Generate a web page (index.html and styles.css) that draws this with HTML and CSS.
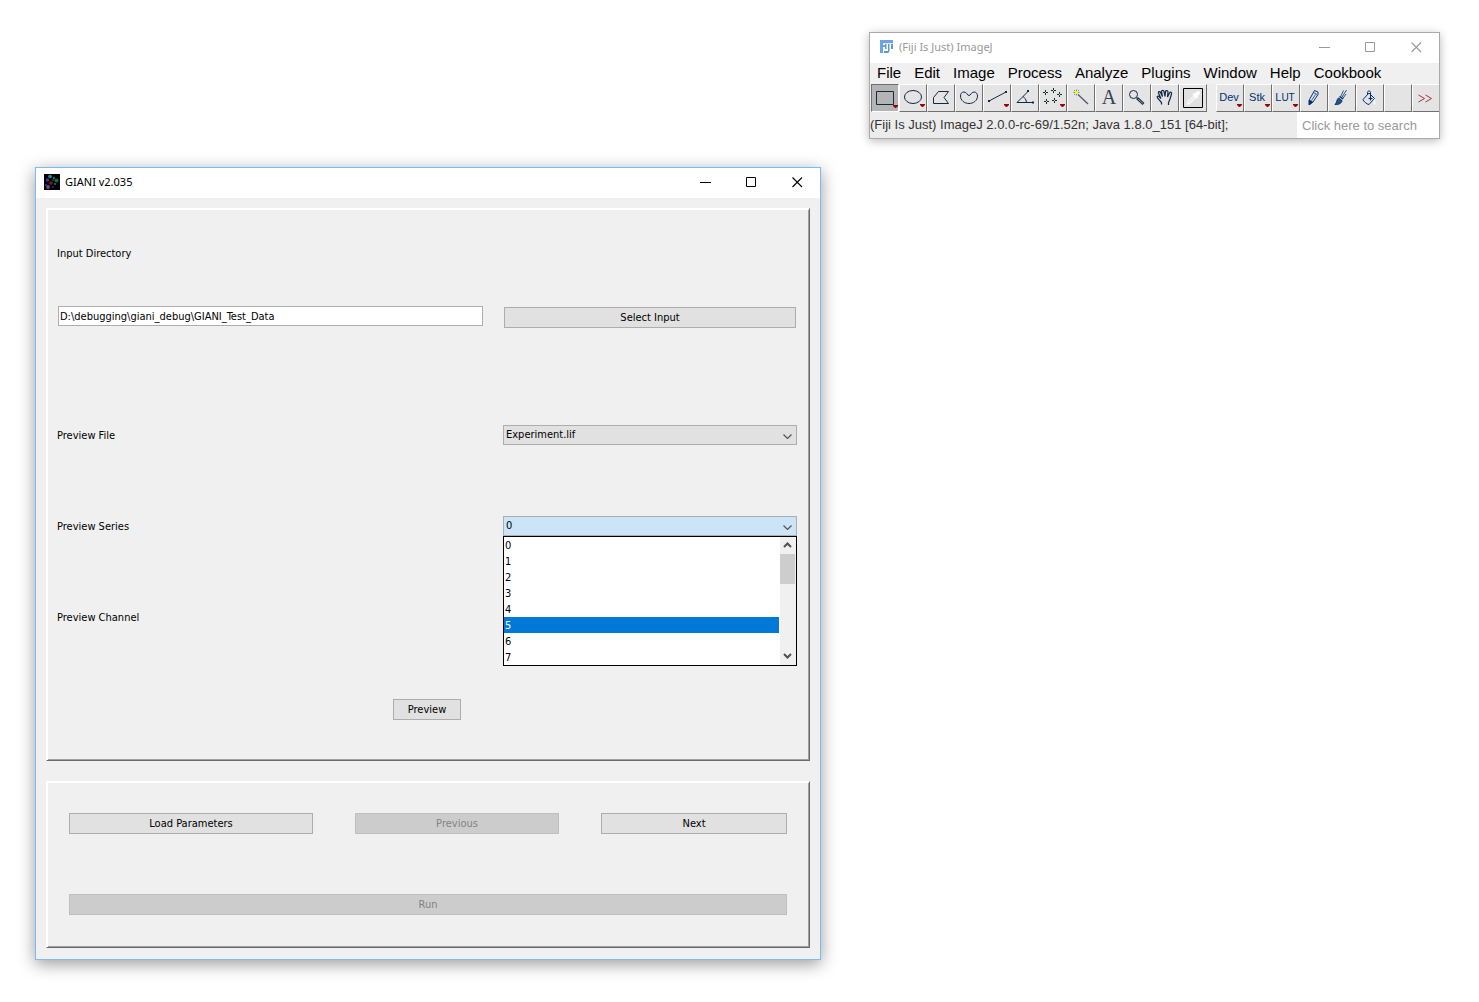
FILE: index.html
```html
<!DOCTYPE html>
<html lang="en">
<head>
<meta charset="utf-8">
<title>GIANI v2.035</title>
<link rel="stylesheet" href="styles.css">
</head>
<body>
<svg class="defs" aria-hidden="true">
  <symbol id="win-min" viewBox="0 0 11 11"><path d="M0 5.5h11" stroke="currentColor"/></symbol>
  <symbol id="win-max" viewBox="0 0 11 11"><path d="M.5 .5h9v9h-9z" fill="none" stroke="currentColor"/></symbol>
  <symbol id="win-close" viewBox="0 0 11 11"><path d="M.5 .5l9.500 9.500M10 .5l-9.500 9.500" fill="none" stroke="currentColor" stroke-width="1.1"/></symbol>
  <symbol id="chev" viewBox="0 0 9 5"><path d="M.5 .5l4 4 4-4" fill="none" stroke="currentColor" stroke-width="1.2"/></symbol>
  <symbol id="chev-bold" viewBox="0 0 9 6"><path d="M1 1l3.500 3.500L8 1" fill="none" stroke="currentColor" stroke-width="2"/></symbol>
  <symbol id="more" viewBox="0 0 5 3"><path d="M0 0h5v1L3 3H2L0 1z" fill="#a00000" stroke="none"/></symbol>
</svg>
<main class="desktop">
  <section class="window giani" aria-label="GIANI">
    <header class="titlebar">
      <svg class="app-icon" viewBox="0 0 16 16">
        <rect width="16" height="16" fill="#000"/>
        <circle cx="6" cy="2.500" r="1.800" fill="#2a8f88"/>
        <circle cx="10" cy="4" r="1.300" fill="#35518a"/>
        <circle cx="12.500" cy="6.500" r="2" fill="#12702c"/>
        <circle cx="3.500" cy="6" r="1.700" fill="#5030a0"/>
        <circle cx="7" cy="9" r="1.800" fill="#7a1c14"/>
        <circle cx="11" cy="10" r="1.200" fill="#274a86"/>
        <circle cx="4" cy="13" r="1.900" fill="#84409a"/>
        <circle cx="9" cy="6" r="1" fill="#284a28"/>
        <circle cx="2" cy="11" r="1" fill="#383878"/>
        <circle cx="9" cy="13" r="1" fill="#402060"/>
      </svg>
      <h1 class="title">GIANI v2.035</h1>
      <div class="controls">
        <button class="ctl" aria-label="Minimize"><svg><use href="#win-min"/></svg></button>
        <button class="ctl" aria-label="Maximize"><svg><use href="#win-max"/></svg></button>
        <button class="ctl" aria-label="Close"><svg><use href="#win-close"/></svg></button>
      </div>
    </header>
    <div class="body">
      <form class="panel inputs">
        <label class="wide" for="dir">Input Directory</label>
        <input class="field" id="dir" type="text" value="D:\debugging\giani_debug\GIANI_Test_Data">
        <button class="btn select-input" type="button">Select Input</button>
        <label class="name" for="file">Preview File</label>
        <div class="combo">
          <select id="file"><option>Experiment.lif</option></select>
          <svg class="arrow"><use href="#chev"/></svg>
        </div>
        <label class="name" for="series">Preview Series</label>
        <div class="combo open">
          <select id="series"><option>0</option></select>
          <svg class="arrow"><use href="#chev"/></svg>
          <div class="popup">
            <ul class="list" role="listbox" aria-label="Series">
              <li role="option">0</li>
              <li role="option">1</li>
              <li role="option">2</li>
              <li role="option">3</li>
              <li role="option">4</li>
              <li role="option" class="active" aria-selected="true">5</li>
              <li role="option">6</li>
              <li role="option">7</li>
            </ul>
            <div class="scroll">
              <span class="step up"><svg><use href="#chev-bold"/></svg></span>
              <span class="thumb"></span>
              <span class="step down"><svg><use href="#chev-bold"/></svg></span>
            </div>
          </div>
        </div>
        <span class="wide name">Preview Channel</span>
        <button class="btn preview" type="button">Preview</button>
      </form>
      <div class="panel actions">
        <div class="row">
          <button class="btn">Load Parameters</button>
          <button class="btn" disabled>Previous</button>
          <button class="btn">Next</button>
        </div>
        <button class="btn" disabled>Run</button>
      </div>
    </div>
  </section>

  <section class="window imagej" aria-label="ImageJ">
    <header class="titlebar">
      <svg class="app-icon" viewBox="0 0 16 16">
        <path d="M2 0h13v3H5v2h2v2H5v6H2z" fill="#6aa5df"/>
        <path d="M7 4h1.500v5H7zM10 4h1.500v7q0 2-2 2H6v-2h4zM13 2h2v7h-2z" fill="#5f96cf"/>
        <path d="M5 3.500h10" stroke="#dbe9f7"/>
      </svg>
      <h2 class="title">(Fiji Is Just) ImageJ</h2>
      <div class="controls">
        <button class="ctl" aria-label="Minimize"><svg><use href="#win-min"/></svg></button>
        <button class="ctl" aria-label="Maximize"><svg><use href="#win-max"/></svg></button>
        <button class="ctl" aria-label="Close"><svg><use href="#win-close"/></svg></button>
      </div>
    </header>
    <nav class="menu">
      <a href="#">File</a><a href="#">Edit</a><a href="#">Image</a><a href="#">Process</a><a href="#">Analyze</a><a href="#">Plugins</a><a href="#">Window</a><a href="#">Help</a><a href="#">Cookbook</a>
    </nav>
    <div class="tools">
      <button class="tool pressed" aria-label="Rectangle"><svg viewBox="1 1 26 26"><path d="M5.500 7.500h17v13h-17z"/><use href="#more" x="22" y="21" width="5" height="3"/></svg></button>
      <button class="tool" aria-label="Oval"><svg viewBox="1 1 26 26"><ellipse cx="14" cy="13" rx="8.500" ry="6.500"/><use href="#more" x="21" y="20" width="5" height="3"/></svg></button>
      <button class="tool" aria-label="Polygon"><svg viewBox="1 1 26 26"><path d="M6.500 19.500v-6l5-6h10l-4.500 6 4.500 6z"/></svg></button>
      <button class="tool" aria-label="Freehand"><svg viewBox="1 1 26 26"><path d="M14 11.500c2 0 2-3.500 5-3.500 2.500 0 3.500 2 3.500 4 0 4.500-4 7.500-8.500 7.500S5.500 16.500 5.500 12c0-2 1-4 3.500-4 3 0 3 3.500 5 3.500z"/></svg></button>
      <button class="tool" aria-label="Line"><svg viewBox="1 1 26 26"><path d="M6 17L23 8"/><path class="dot" d="M5 16h2v2H5zM22 7h2v2h-2z"/><use href="#more" x="21" y="20" width="5" height="3"/></svg></button>
      <button class="tool" aria-label="Angle"><svg viewBox="1 1 26 26"><path d="M22 18.500H6L17 7.500M12 12.500q3.500 2 3.500 6"/><path class="dot" d="M16 6h2v2h-2zM21 17.500h2v2h-2z"/></svg></button>
      <button class="tool" aria-label="Multi-point"><svg viewBox="1 1 26 26"><path d="M6.500 6v5M4 8.500h5M14.500 4v5M12 6.500h5M20.500 8v5M18 10.500h5M7.500 15v5M5 17.500h5M15.500 14v5M13 16.500h5"/><path fill="#ff0" stroke="none" d="M6 8h1v1H6zM14 6h1v1h-1zM20 10h1v1h-1zM7 17h1v1H7zM15 16h1v1h-1z"/><use href="#more" x="21" y="20" width="5" height="3"/></svg></button>
      <button class="tool" aria-label="Wand"><svg viewBox="1 1 26 26"><path d="M11 10.500l10 9.500" stroke="#506070" stroke-width="1.400"/><path d="M7 6l5 5M12 6l-5 5M9.500 5.500v6M6.500 8.500h6" stroke="#65718a" stroke-width=".8"/><path fill="#ff0" stroke="none" d="M8 7h3v3H8z"/></svg></button>
      <button class="tool" aria-label="Text"><svg viewBox="1 1 26 26"><text x="14" y="20" class="letter">A</text></svg></button>
      <button class="tool" aria-label="Magnifier"><svg viewBox="1 1 26 26"><circle cx="10.500" cy="10.500" r="4"/><path d="M14 14l6.500 6" stroke-width="2.800"/><path d="M15 15l5 4.500" stroke="#ccc" stroke-width=".8"/></svg></button>
      <button class="tool" aria-label="Hand"><svg viewBox="1 1 26 26"><path stroke-width="1.200" d="M10.500 20.500v-2l-4-4.500c-1-1.500.5-2.500 1.500-1.500l2 2-2.500-5.500c-.5-1.500 1.500-2 2-.5l2 4-1-5c0-1.500 2.500-1.500 2.500 0l1 5 .5-5c.5-1.500 2.500-1 2.500.5l-.5 5 2-4c1-1.500 2.500-.5 2 1l-1.500 5-1.500 3.500v2.500"/></svg></button>
      <button class="tool" aria-label="Color picker"><svg viewBox="1 1 26 26"><path d="M4.500 4.500h19v19h-19z" stroke="#000" fill="#e0e0e0"/><path d="M8 20.500l1-3 6-6 2 2-6 6z" fill="#ececec" stroke="#fff"/><path d="M14 9.500l4.500 4.500" stroke="#fff" stroke-width="2"/><path d="M16.500 11.500l2.500-2.500" stroke="#fff" stroke-width="4" stroke-linecap="round"/></svg></button>
      <span class="gap"></span>
      <button class="tool" aria-label="Dev"><svg viewBox="1 1 26 26"><text x="13" y="17">Dev</text><use href="#more" x="21" y="20" width="5" height="3"/></svg></button>
      <button class="tool" aria-label="Stk"><svg viewBox="1 1 26 26"><text x="13" y="17">Stk</text><use href="#more" x="21" y="20" width="5" height="3"/></svg></button>
      <button class="tool" aria-label="LUT"><svg viewBox="1 1 26 26"><text x="13" y="17">L<tspan class="small">UT</tspan></text><use href="#more" x="21" y="20" width="5" height="3"/></svg></button>
      <button class="tool blue" aria-label="Pencil"><svg viewBox="1 1 26 26"><path d="M14.500 6.500l3.500 1.500v2.500l-5 7.500-3.500 2.500v-5z" fill="#dfe8f2"/><path d="M13.500 8.500l3.500 2M15.500 10.500l-4 6" stroke-width=".8"/><path d="M9 21v-5l3.500 2z" fill="#003070"/></svg></button>
      <button class="tool blue" aria-label="Paintbrush"><svg viewBox="1 1 26 26"><path d="M18.500 6l-5 8M15.500 6.500l-3 6.500M18 10l-3.500 5" stroke-width=".8"/><path d="M11.500 12.500l3.500 2.500" stroke-width="1.500"/><path d="M10.500 14l3.500 2.500c0 2.500-3.500 4.500-7 4 2-1.500 1.500-5 3.500-6.500z" fill="#28548c"/></svg></button>
      <button class="tool blue" aria-label="Flood fill"><svg viewBox="1 1 26 26"><path d="M17.500 14c2 1 2.500 4 1.500 7-1.500-1-2-3-1.500-7z" fill="#fff" stroke="none"/><path d="M13 9l5.500 5.500-5.500 6c-2 0-5.500-3-6-5zM11.500 10.500v-2c0-2 3-2 3 0V14"/><path d="M12.500 14.500h4M14.500 12.500v4" stroke-width="1.200"/></svg></button>
      <button class="tool" aria-label="Unused"></button>
      <button class="tool last" aria-label="More tools"><svg viewBox="1 1 26 26"><path d="M6.500 11l6 3.500-6 3.500M13.500 11l6 3.500-6 3.500" stroke="#b03038"/></svg></button>
    </div>
    <footer class="status">
      <p class="message">(Fiji Is Just) ImageJ 2.0.0-rc-69/1.52n; Java 1.8.0_151 [64-bit];</p>
      <input class="search" type="text" placeholder="Click here to search" aria-label="Search">
    </footer>
  </section>
</main>
</body>
</html>
```
FILE: styles.css
```css
* { box-sizing: border-box; }
body { margin: 0; background: #fff; color: #000; font: 11px/14px "DejaVu Sans Condensed", "DejaVu Sans", sans-serif; font-stretch: condensed; }
button, input, select { font: inherit; font-stretch: inherit; color: inherit; margin: 0; border-radius: 0; }
h1, h2, p, ul { margin: 0; padding: 0; }
.defs { position: absolute; width: 0; height: 0; }

.desktop { display: grid; grid-template-columns: 786fr 571fr; column-gap: 48px; align-items: start; padding: 32px 39px 32px 35px; }
.window { min-width: 0; border: 1px solid #aaa; background: #f0f0f0; box-shadow: 0 2px 9px rgba(0, 0, 0, .28); }
.giani { margin-top: 135px; border-color: #7eb9f0; box-shadow: 0 4px 16px rgba(0, 0, 0, .4); }

.titlebar { display: flex; align-items: flex-start; height: 30px; padding-left: 8px; gap: 5px; background: #fff; }
.imagej .titlebar { color: #999; }
.app-icon { width: 16px; height: 16px; margin-top: 6px; }
.imagej .app-icon { margin-top: 7px; }
.title { flex: 1; font: 11px/28px "Noto Sans", "Open Sans", sans-serif; }
.controls { display: flex; }
.ctl { display: flex; width: 46px; height: 29px; padding: 9px 0 0 18px; border: 0; background: none; }
.ctl svg { width: 11px; height: 11px; }

.body { display: grid; gap: 20px; padding: 10px 10px 11px; }
.panel { border: 1px solid; border-color: #fff #696969 #696969 #fff; box-shadow: inset 1px 1px #fff, inset -1px -1px #a0a0a0; }
.inputs { display: grid; grid-template-columns: 427fr 294fr; grid-template-rows: 88px 91px 91px 91px 91px 95px; column-gap: 19px; align-items: center; padding: 1px 12px 3px 10px; }
.wide { grid-column: 1 / -1; }
.name { padding-top: 2px; }
.field { align-self: start; height: 20px; margin: 8px 1px 0; padding: 0 1px; border: 1px solid #abadb3; background: #fff; }
.btn { min-width: 0; height: 21px; padding: 0 14px; border: 1px solid #adadad; background: #e1e1e1; }
.btn:disabled { border-color: #bfbfbf; background: #ccc; color: #838383; }
.select-input { align-self: start; margin: 9px 1px 0; }
.preview { grid-column: 1 / -1; justify-self: center; }

.combo { position: relative; height: 20px; }
.combo select { display: block; width: 100%; height: 20px; padding: 1px 2px 0; border: 1px solid #adadad; background: #e1e1e1; appearance: none; }
.combo.open select { background: #cce4f7; }
.arrow { position: absolute; right: 5px; top: 9px; width: 9px; height: 5px; color: #555; }
.popup { position: absolute; z-index: 1; top: 20px; left: 0; right: 0; display: flex; border: 1px solid #000; background: #fff; }
.list { flex: 1; list-style: none; margin-right: 1px; line-height: 14px; }
.list li { padding: 2px 0 0 1px; }
.list .active { background: #0078d7; color: #fff; }
.scroll { display: flex; flex-direction: column; width: 16px; padding-right: 1px; background: #f0f0f0; }
.step { display: grid; place-items: center; height: 17px; color: #505050; }
.step svg { width: 9px; height: 6px; }
.up svg { transform: rotate(180deg); }
.thumb { height: 30px; background: #cdcdcd; }
.down { margin-top: auto; }

.actions { display: grid; gap: 60px; padding: 31px 22px 32px; }
.row { display: grid; grid-template-columns: 244fr 204fr 186fr; gap: 42px; }

.imagej { font: 13px/16px "Liberation Sans", Arial, sans-serif; }
.menu { display: flex; gap: 13px; height: 21px; padding-left: 7px; font-size: 15px; line-height: 20px; }
.menu a { color: #000; text-decoration: none; }
.tools { display: grid; grid-template-columns: repeat(12, 28fr) 9fr repeat(7, 28fr) 27fr; padding-left: 1px; background: #ececec; }
.tool { min-width: 0; height: 28px; padding: 0; border: 1px solid; border-color: #fff #707070 #707070 #fff; background: #e4e4e4; overflow: hidden; }
.tool svg { display: block; width: 26px; height: 26px; margin: auto; fill: none; stroke: #102a44; }
.tool.blue svg { stroke: #003070; }
.tool .dot { fill: #102a44; stroke: none; }
.tool text { fill: #003070; stroke: none; font: 11px "Liberation Sans", Arial, sans-serif; text-anchor: middle; }
.tool .small { font-size: 10px; }
.tool .letter { fill: #34424f; font: 20px "Liberation Serif", serif; }
.pressed { border-color: #707070 #fff #fff #707070; background: #b4b4b4; }
.tools .last { border-right: 0; }
.status { display: grid; grid-template-columns: 427fr 142fr; grid-template-rows: 26px; background: #ececec; color: #333; }
.message { min-width: 0; line-height: 26px; white-space: nowrap; }
.search { width: 100%; min-width: 0; height: 26px; padding: 1px 5px 0; border: 0; background: #fff; }
.search::placeholder { color: #999; opacity: 1; }
```
